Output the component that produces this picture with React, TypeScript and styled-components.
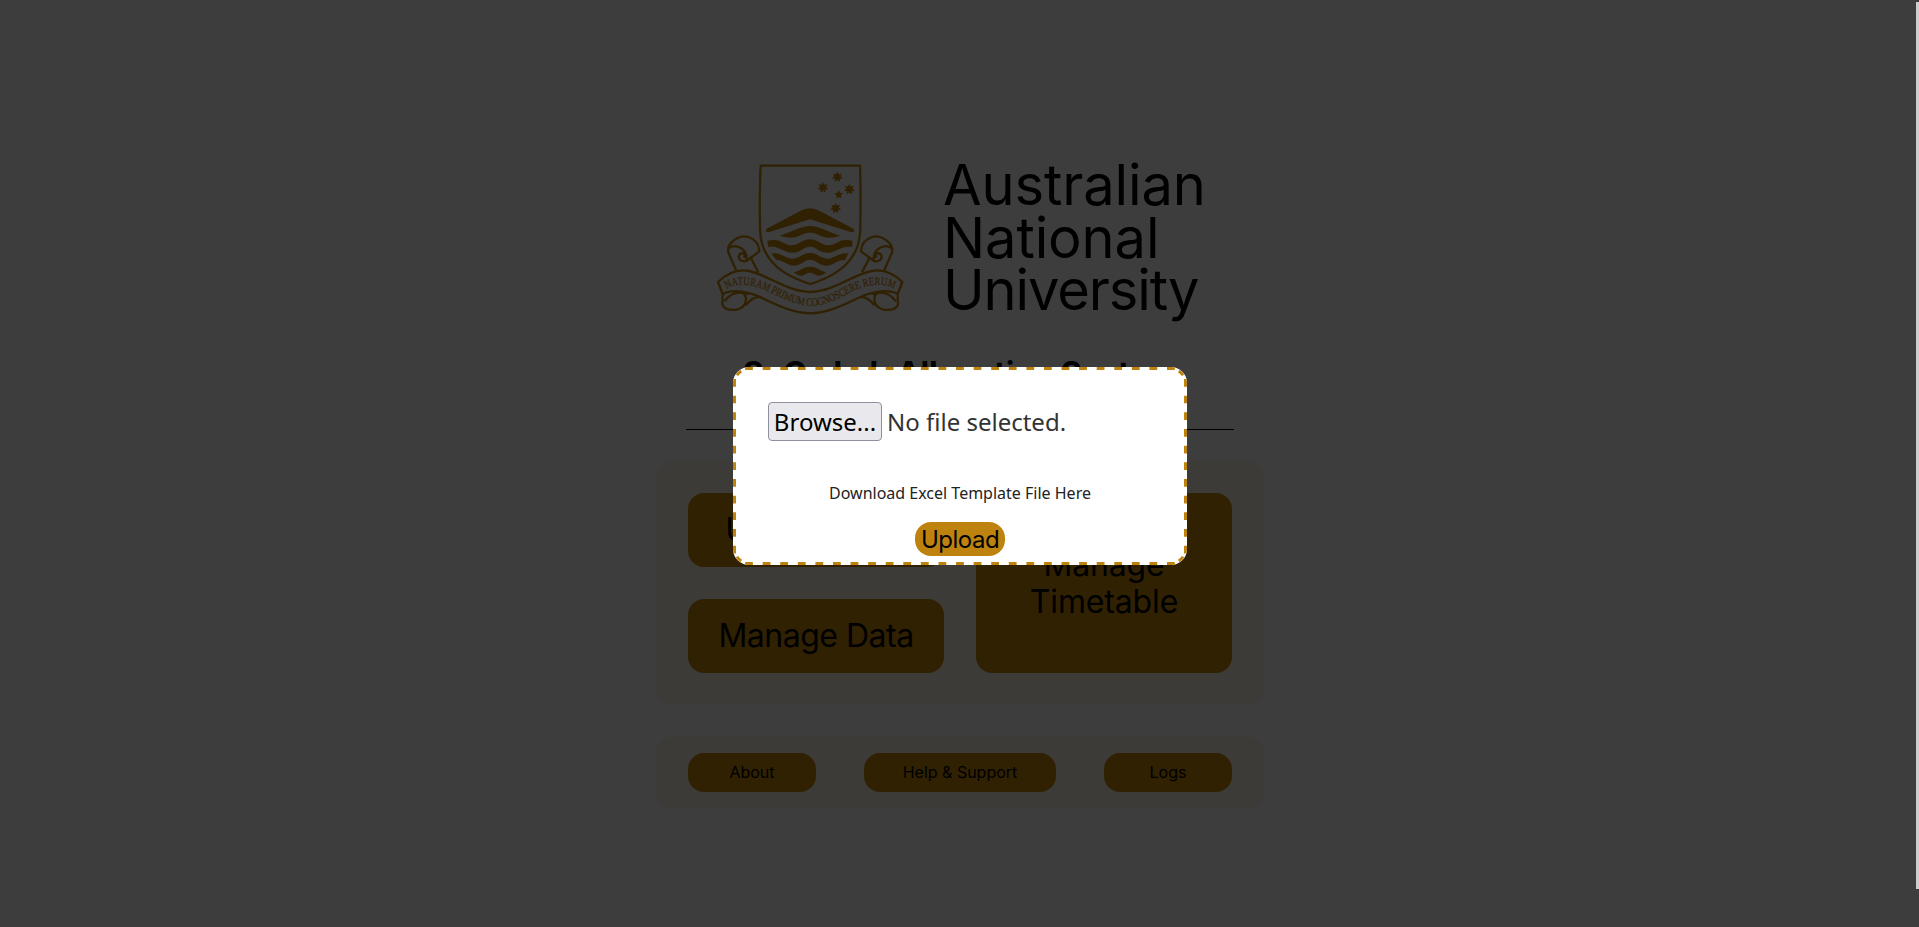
import React from "react";
import styled, { createGlobalStyle } from "styled-components";

const brand = '"Inter", "Liberation Sans", sans-serif';

const GlobalStyle = createGlobalStyle`
  *, *::before, *::after { box-sizing: border-box; }
  html, body { margin: 0; height: 100%; overflow: hidden; background: #f2f2f2; }
  body { font-family: ${brand}; color: #000; }
  button { font: inherit; color: inherit; border: 0; padding: 0; }
`;

const Page = styled.main`
  height: 927px;
  display: flex;
  flex-direction: column;
  align-items: center;
  padding: 157px 0 0 1px;
  background: #f2f2f2;
`;

const Brand = styled.header`
  width: 548px;
  height: 172px;
  display: flex;
`;

const Crest = styled.svg`
  width: 220px;
  height: 180px;
  margin: -7px 0 0 14px;
  flex: none;
`;

const Wordmark = styled.div`
  flex: none;
  margin: 2px 0 0 23px;
  display: flex;
  flex-direction: column;
  font-size: 56px;
  line-height: 52.5px;
`;

const WordLine = styled.span<{ $spacing: number }>`
  white-space: nowrap;
  letter-spacing: ${(p) => p.$spacing}px;
`;

const Title = styled.h1`
  margin: 26px 0 0;
  height: 75px;
  width: 548px;
  font-size: 32px;
  line-height: 38px;
  font-weight: 700;
  letter-spacing: -0.2px;
  text-align: center;
  white-space: nowrap;
  border-bottom: 1px solid #000;
`;

const Panel = styled.section`
  width: 608px;
  margin-top: 31px;
  padding: 32px;
  display: grid;
  grid-template-columns: 256px 256px;
  grid-template-rows: 74px 74px;
  gap: 32px;
  border-radius: 16px;
  background: #f2ebdc;
`;

const MenuButton = styled.button<{ $tall?: boolean }>`
  grid-row: ${(p) => (p.$tall ? "1 / span 2" : "auto")};
  grid-column: ${(p) => (p.$tall ? "2" : "1")};
  border-radius: 16px;
  background: #be830e;
  font-size: 32px;
  line-height: 37.5px;
  letter-spacing: ${(p) => (p.$tall ? -0.15 : -0.5)}px;
`;

const Footer = styled.footer`
  width: 608px;
  height: 71px;
  margin-top: 32px;
  padding: 16px 32px;
  display: flex;
  justify-content: space-between;
  border-radius: 16px;
  background: #f2ebdc;
`;

const FooterButton = styled.button<{ $wide?: boolean }>`
  width: ${(p) => (p.$wide ? 192 : 128)}px;
  height: 39px;
  padding-bottom: 1px;
  border-radius: 16px;
  background: #be830e;
  font-size: 16px;
`;

const Overlay = styled.div`
  position: fixed;
  inset: 0;
  display: flex;
  align-items: center;
  justify-content: center;
  padding: 5px 0 0 1px;
  background: rgba(0, 0, 0, 0.75);
`;

const Dialog = styled.div`
  position: relative;
  width: 454px;
  height: 198px;
  padding: 35px;
  display: flex;
  flex-direction: column;
  align-items: center;
  overflow: hidden;
  border-radius: 16px;
  background: #fff;
  font-family: "Noto Sans", sans-serif;
`;

const DashedEdge = styled.svg`
  position: absolute;
  inset: 0;
  width: 454px;
  height: 198px;
  pointer-events: none;
`;

const FileField = styled.div`
  align-self: stretch;
  height: 39px;
  display: flex;
  flex: none;
  align-items: center;
  gap: 5px;
  font-size: 24px;
  line-height: 36px;
  color: #333;
  white-space: nowrap;
`;

const Browse = styled.button`
  && {
    width: 114px;
    height: 39px;
    border: 1px solid #8f8f9d;
    border-radius: 4px;
    background: #e9e9ed;
    color: #000;
  }
`;

const Template = styled.a`
  margin-top: 41px;
  font-size: 16px;
  line-height: 22px;
  color: #222;
`;

const Upload = styled.button`
  && {
    flex: none;
    width: 90px;
    height: 34px;
    margin-top: 18px;
    border-radius: 16px;
    background: #be830e;
    font-family: ${brand};
    font-size: 24px;
    letter-spacing: -0.5px;
  }
`;

const Scrollbar = styled.div`
  position: fixed;
  top: 2px;
  right: 0;
  width: 3px;
  height: 887px;
  background: #cdcdcd;
`;

const star = (cx: number, cy: number, r: number, n: number) =>
  Array.from({ length: n * 2 }, (_, i) => {
    const a = (i * Math.PI) / n - Math.PI / 2;
    const d = i % 2 ? r * 0.55 : r;
    return `${cx + d * Math.cos(a)},${cy + d * Math.sin(a)}`;
  }).join(" ");

const stars = [
  [412, 81, 17, 7], [369, 113, 17, 7], [448, 118, 17, 7], [416, 134, 13, 5], [407, 175, 17, 7],
];

function CrestMark() {
  return (
    <Crest viewBox="0 0 660 540" fill="none" stroke="#be830e" strokeWidth="7" strokeLinejoin="round">
      <path d="M182 47H480C482 105 482 170 481 235C479 280 470 303 451 328C425 363 382 386 331 402C280 386 236 363 210 328C191 303 182 280 180 235C179 170 179 105 182 47Z" />
      <g fill="#be830e" stroke="none">
        {stars.map(([x, y, r, n]) => <polygon key={x} points={star(x, y, r, n)} />)}
        <path d="M200 236L302 182Q330 167 358 182L460 236Q466 241 461 246L452 246L330 208L208 246Q193 247 200 236Z" />
        <path d="M239 257C275 247 297 229 330 228C363 229 385 247 421 257Q392 267 372 261C352 253 344 248 330 248C316 248 308 253 288 261Q268 267 239 257Z" />
        <path d="M202 273C247 262 248 288 277 286C301 283 304 269 330 268C356 269 359 283 383 286C412 288 413 262 458 273L456 291C420 285 410 310 379 308C355 306 349 290 330 290C311 290 305 306 281 308C250 310 240 285 205 291Z" />
        <path d="M214 310C247 306 254 326 279 326C304 323 306 309 330 308C354 309 356 323 381 326C406 326 413 306 446 310L435 330C409 329 402 347 377 347C354 344 347 329 330 329C313 329 306 344 283 347C258 347 251 329 229 330Z" />
        <path d="M281 367C305 361 308 350 330 350C352 350 355 361 379 367Q365 379 352 377C343 372 338 368 330 368C322 368 317 372 308 377Q295 379 281 367Z" />
      </g>
      {[undefined, "translate(661 0) scale(-1 1)"].map((t, i) => (
        <g key={i} transform={t}>
          <path d="M109 362L86 310Q80 292 94 278Q119 253 145 261Q177 272 178 304L139 333Q118 337 116 320Q119 308 130 310Q137 315 131 323M139 333Q143 307 122 294Q103 283 87 294M154 326L175 367" />
          <path d="M331 426C260 425 205 375 147 363C111 356 83 368 54 396L68 432L67 464Q76 483 110 479Q137 472 138 448Q138 433 125 428Q95 425 73 454M68 432C91 419 130 423 166 435C220 458 268 489 331 490M138 466Q151 446 176 440M134 434L146 430" />
        </g>
      ))}
      <path id="motto" stroke="none" d="M80 417C105 400 145 401 180 414C236 435 279 468 335 468C397 466 438 427 487 412C530 399 565 404 590 421" />
      <text fill="#be830e" stroke="#be830e" strokeWidth="0.6" fontFamily="Liberation Serif, serif" fontSize="34">
        <textPath href="#motto" textLength="530" lengthAdjust="spacingAndGlyphs">NATURAM PRIMUM COGNOSCERE RERUM</textPath>
      </text>
    </Crest>
  );
}

function DialogEdge() {
  return (
    <DashedEdge viewBox="0 0 454 198" fill="none" stroke="#be830e" strokeWidth="3">
      <path strokeDasharray="7.8 9.78" d="M12.1 1.5H442M12.1 196.5H442" />
      <path strokeDasharray="7.7 8.97" d="M1.5 12V186.5M452.5 12V186.5" />
      <path d="M3.9 8.2Q5.6 5.6 8.2 3.9M445.8 3.9Q448.4 5.6 450.1 8.2M3.9 189.8Q5.6 192.4 8.2 194.1M445.8 194.1Q448.4 192.4 450.1 189.8" />
    </DashedEdge>
  );
}

export default function App() {
  return (
    <>
      <GlobalStyle />
      <Page>
        <Brand>
          <CrestMark />
          <Wordmark>
            <WordLine $spacing={-0.1}>Australian</WordLine>
            <WordLine $spacing={-0.1}>National</WordLine>
            <WordLine $spacing={-1.1}>University</WordLine>
          </Wordmark>
        </Brand>
        <Title>SoCo Lab Allocation System</Title>
        <Panel>
          <MenuButton>Upload Data</MenuButton>
          <MenuButton>Manage Data</MenuButton>
          <MenuButton $tall>Manage<br />Timetable</MenuButton>
        </Panel>
        <Footer>
          <FooterButton>About</FooterButton>
          <FooterButton $wide>Help &amp; Support</FooterButton>
          <FooterButton>Logs</FooterButton>
        </Footer>
      </Page>
      <Overlay>
        <Dialog>
          <FileField><Browse>Browse...</Browse>No file selected.</FileField>
          <Template>Download Excel Template File Here</Template>
          <Upload>Upload</Upload>
          <DialogEdge />
        </Dialog>
      </Overlay>
      <Scrollbar />
    </>
  );
}
